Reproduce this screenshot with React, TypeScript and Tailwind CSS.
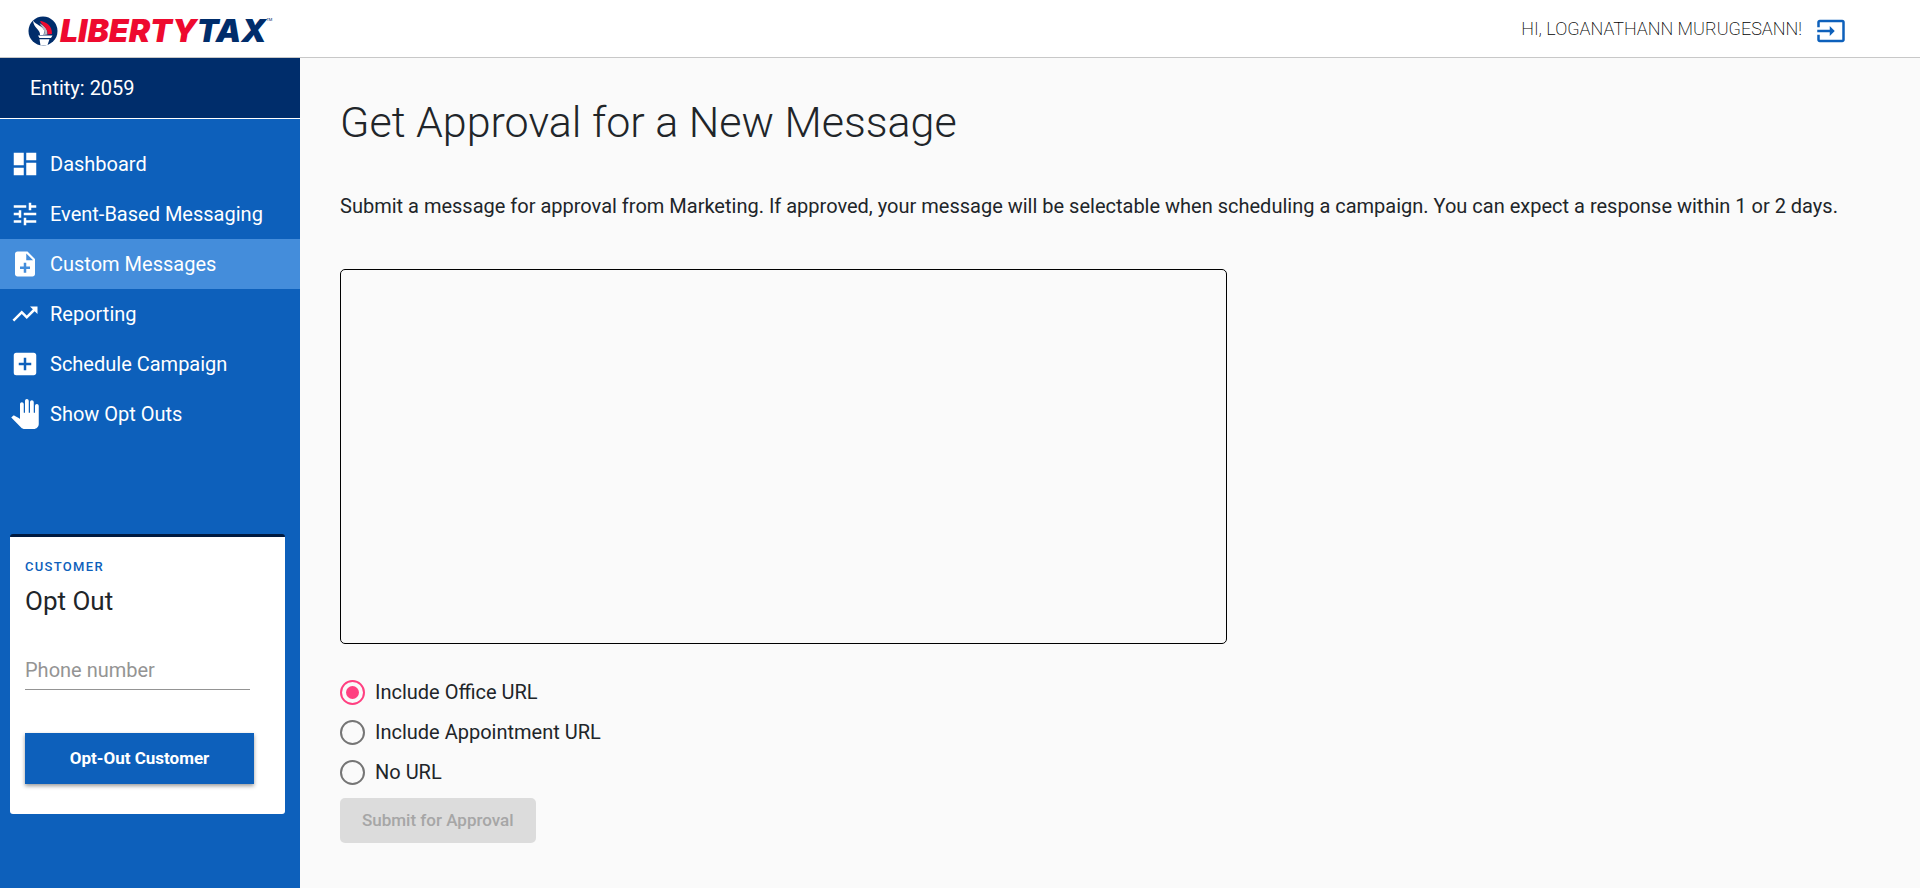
import { useState } from "react";
import type { IconType } from "react-icons";
import {
  MdAddBox,
  MdDashboard,
  MdInput,
  MdNoteAdd,
  MdPanTool,
  MdTrendingUp,
  MdTune,
} from "react-icons/md";

const navItems: { label: string; icon: IconType }[] = [
  { label: "Dashboard", icon: MdDashboard },
  { label: "Event-Based Messaging", icon: MdTune },
  { label: "Custom Messages", icon: MdNoteAdd },
  { label: "Reporting", icon: MdTrendingUp },
  { label: "Schedule Campaign", icon: MdAddBox },
  { label: "Show Opt Outs", icon: MdPanTool },
];

const urlOptions = ["Include Office URL", "Include Appointment URL", "No URL"];

function Logo() {
  return (
    <a href="#" className="flex items-center pt-1">
      <svg viewBox="0 0 30 30" className="mr-[2px] size-[30px]" aria-hidden="true">
        <circle cx="15" cy="15" r="14.5" fill="#002d6b" />
        <path d="M5 4.5C7.5 8.5 15 10 16.5 15L15.500 19H12C12.500 13.500 5.500 12 5 4.500Z" fill="#fff" />
        <path d="M11.500 7C14.500 9.500 20 11 19.500 18.500L15.500 19C18.500 14.500 14 12.500 11.500 7Z" fill="#b9bdc4" />
        <path d="M12 5C17 5.500 24.500 9 24 18L19.500 18.500C20.500 12.500 14.500 10.500 12 5Z" fill="#ee0a2f" />
        <path d="M10 19.500H24.500L23 22H11.500ZM11.500 23.200H21.500L19.500 29L12.500 29.500Z" fill="#fff" />
      </svg>
      <span className="font-['Inter'] text-[32px] leading-8 font-black italic">
        <span className="text-[#ee0a2f]">LIBERTY</span>
        <span className="text-[#002d6b]">TAX</span>
      </span>
      <span className="self-start text-[4px] leading-[10px] text-[#002d6b]">TM</span>
    </a>
  );
}

function OptOutCard() {
  return (
    <form
      onSubmit={(e) => e.preventDefault()}
      className="mr-[15px] ml-[10px] flex flex-col rounded-[3px] border-t-[3px] border-[#001a40] bg-white px-[15px] pt-5 pb-[30px]"
    >
      <p className="text-[13px] leading-5 font-medium tracking-widest text-[#0d60bb] uppercase">Customer</p>
      <h2 className="mt-2 text-[26px] leading-8 text-[#212529]">Opt Out</h2>
      <input
        type="tel"
        aria-label="Phone number"
        placeholder="Phone number"
        className="mt-[33px] mr-5 h-10 border-b border-[#949494] text-xl outline-none placeholder:text-[#949494]"
      />
      <button
        type="submit"
        className="mt-[43px] mr-4 h-[51px] bg-[#0d60bb] text-[17px] font-bold text-white shadow-[0_2px_4px_rgba(0,0,0,0.4)]"
      >
        Opt-Out Customer
      </button>
    </form>
  );
}

export default function App() {
  const [selected, setSelected] = useState(urlOptions[0]);
  const [message, setMessage] = useState("");

  return (
    <div className="flex min-h-screen flex-col bg-[#fafafa] font-['Roboto',sans-serif] text-[#212529]">
      <header className="flex h-[58px] items-center justify-between border-b border-[#c8c8c8] bg-white pr-[74px] pl-7">
        <Logo />
        <div className="flex items-center gap-[14px]">
          <span className="text-lg font-extralight text-black">HI, LOGANATHANN MURUGESANN!</span>
          <button type="button" aria-label="Log out" className="pt-1 text-[#0d60bb]">
            <MdInput className="size-[30px]" />
          </button>
        </div>
      </header>

      <div className="flex grow">
        <aside className="w-[300px] shrink-0 bg-[#0d60bb] text-white">
          <div className="flex h-[61px] items-center border-b border-white bg-[#002d6b] pl-[30px] text-xl">
            Entity: 2059
          </div>
          <nav className="mt-5 mb-[95px]">
            {navItems.map(({ label, icon: Icon }) => (
              <a
                key={label}
                href="#"
                className={`flex h-[50px] items-center gap-[10px] pl-[10px] text-xl ${
                  label === "Custom Messages" ? "bg-[#448ddb]" : ""
                }`}
              >
                <Icon className="size-[30px]" />
                {label}
              </a>
            ))}
          </nav>
          <OptOutCard />
        </aside>

        <main className="min-w-0 grow px-10 pt-9">
          <h1 className="text-[43px] leading-[56px] font-light">Get Approval for a New Message</h1>
          <p className="mt-10 text-xl leading-8">
            Submit a message for approval from Marketing. If approved, your message will be selectable when
            scheduling a campaign. You can expect a response within 1 or 2 days.
          </p>
          <form onSubmit={(e) => e.preventDefault()} className="mt-[47px]">
            <textarea
              aria-label="Message"
              value={message}
              onChange={(e) => setMessage(e.target.value)}
              className="block h-[375px] w-[887px] max-w-full resize-none rounded-[5px] border border-black p-3 text-xl outline-none"
            />
            <div className="mt-7 flex flex-col items-start">
              {urlOptions.map((option) => (
                <label key={option} className="flex h-10 items-center gap-[10px] text-xl">
                  <input
                    type="radio"
                    name="url"
                    checked={selected === option}
                    onChange={() => setSelected(option)}
                    className="grid size-[25px] appearance-none place-items-center rounded-full border-2 border-[#757575] before:size-[13px] before:rounded-full checked:border-[#ff4081] checked:before:bg-[#ff4081]"
                  />
                  {option}
                </label>
              ))}
            </div>
            <button
              type="submit"
              disabled={message === ""}
              className="mt-[6px] h-[45px] rounded-[5px] bg-[#dcdcdc] px-[22px] text-[17px] font-medium text-[#a6a6a6]"
            >
              Submit for Approval
            </button>
          </form>
        </main>
      </div>
    </div>
  );
}
